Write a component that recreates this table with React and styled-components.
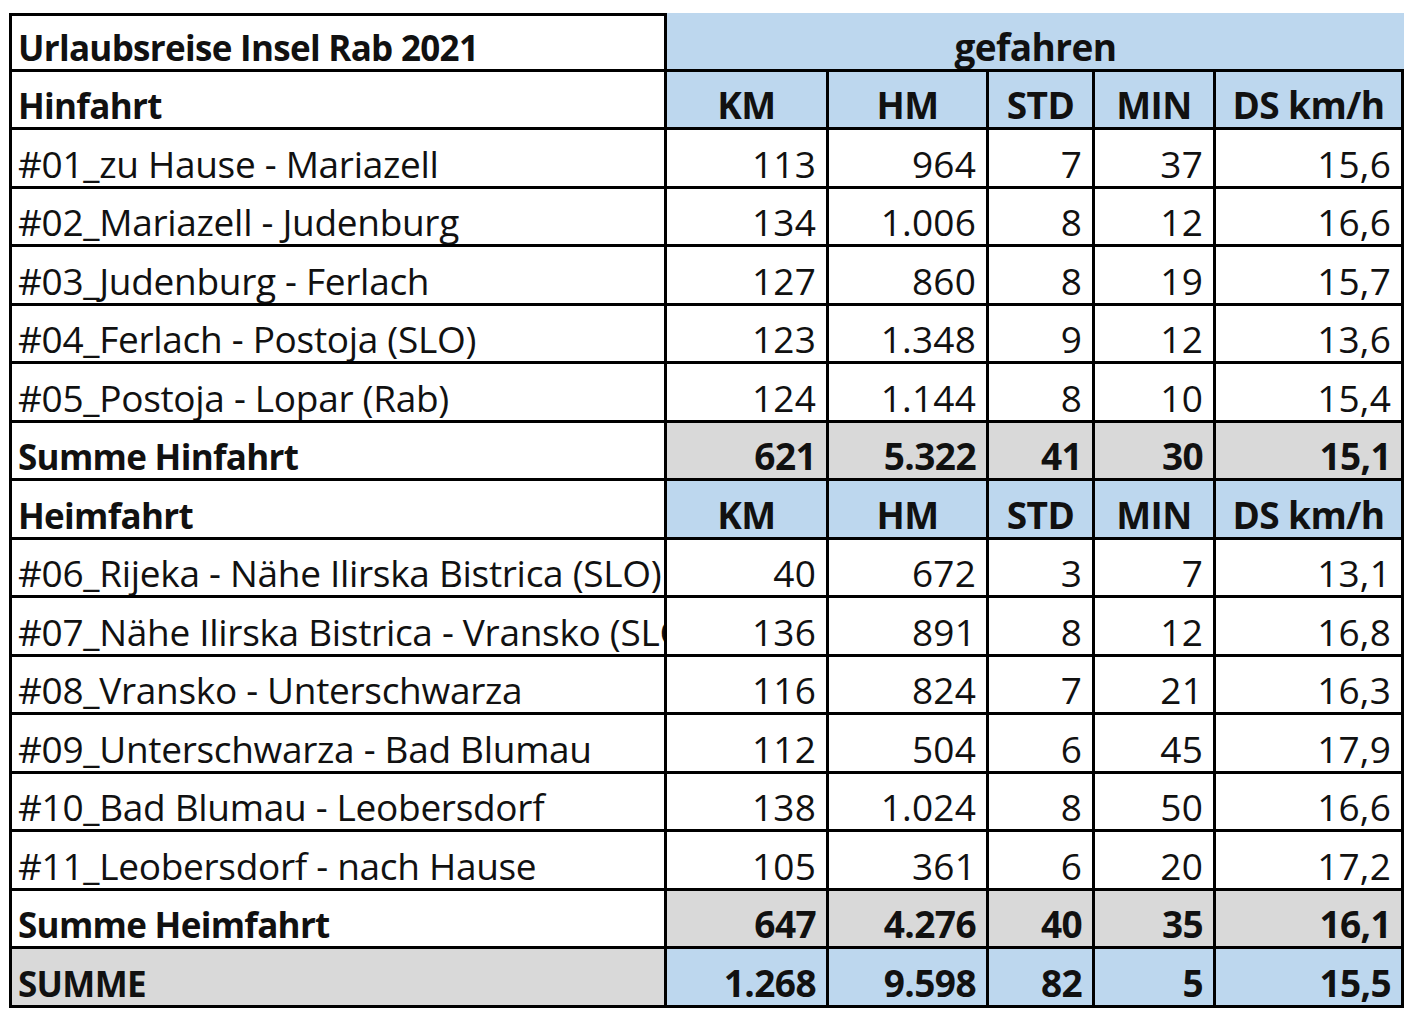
import React from "react";
import styled, { createGlobalStyle } from "styled-components";

const GlobalStyle = createGlobalStyle`
  html, body {
    margin: 0;
    padding: 0;
    background: #ffffff;
  }
  body {
    font-family: "Open Sans", "Noto Sans", sans-serif;
    color: #111111;
  }
`;

const BLUE = "#bdd7ee";
const GREY = "#d9d9d9";

const legs = {
  hin: [
    ["#01_zu Hause - Mariazell", "113", "964", "7", "37", "15,6"],
    ["#02_Mariazell - Judenburg", "134", "1.006", "8", "12", "16,6"],
    ["#03_Judenburg - Ferlach", "127", "860", "8", "19", "15,7"],
    ["#04_Ferlach - Postoja (SLO)", "123", "1.348", "9", "12", "13,6"],
    ["#05_Postoja - Lopar (Rab)", "124", "1.144", "8", "10", "15,4"],
  ],
  heim: [
    ["#06_Rijeka - Nähe Ilirska Bistrica (SLO)", "40", "672", "3", "7", "13,1"],
    ["#07_Nähe Ilirska Bistrica - Vransko (SLO)", "136", "891", "8", "12", "16,8"],
    ["#08_Vransko - Unterschwarza", "116", "824", "7", "21", "16,3"],
    ["#09_Unterschwarza - Bad Blumau", "112", "504", "6", "45", "17,9"],
    ["#10_Bad Blumau - Leobersdorf", "138", "1.024", "8", "50", "16,6"],
    ["#11_Leobersdorf - nach Hause", "105", "361", "6", "20", "17,2"],
  ],
};

const columns = ["KM", "HM", "STD", "MIN", "DS km/h"];

const Sheet = styled.div`
  display: grid;
  grid-template-columns: 658px 162px 160px 106px 121px 188px;
  grid-auto-rows: 58.5px;
  margin: 13px 0 0 9px;
  width: max-content;
`;

const Cell = styled.div`
  box-sizing: border-box;
  display: flex;
  align-items: flex-end;
  justify-content: ${(p) =>
    p.$align === "right" ? "flex-end" : p.$align === "center" ? "center" : "flex-start"};
  grid-column: ${(p) => (p.$span ? `span ${p.$span}` : "auto")};
  padding: 0 ${(p) => (p.$align === "right" ? "10px" : "8px")} 4px 8px;
  background: ${(p) => p.$bg || "#ffffff"};
  border-right: ${(p) => (p.$openRight ? "none" : "3px solid #000")};
  border-bottom: 3px solid #000;
  border-left: ${(p) => (p.$first ? "3px solid #000" : "none")};
  border-top: ${(p) => (p.$top ? "3px solid #000" : "none")};
  font-size: 37px;
  line-height: 1;
  font-weight: ${(p) => (p.$bold ? 700 : 400)};
  letter-spacing: ${(p) => (p.$bold ? "-0.6px" : "0.2px")};
  white-space: nowrap;
  overflow: hidden;
`;

const Label = styled(Cell).attrs({ $first: true })`
  padding-left: 6px;
  font-size: ${(p) => (p.$bold ? "35px" : "37px")};
  letter-spacing: ${(p) => (p.$bold ? "-0.7px" : "-0.3px")};
`;

function HeaderRow({ title }) {
  return (
    <>
      <Label $bold>{title}</Label>
      {columns.map((c) => (
        <Cell key={c} $bg={BLUE} $bold $align="center">
          {c}
        </Cell>
      ))}
    </>
  );
}

function LegRow({ row }) {
  const [name, ...values] = row;
  return (
    <>
      <Label>{name}</Label>
      {values.map((v, i) => (
        <Cell key={i} $align="right">
          {v}
        </Cell>
      ))}
    </>
  );
}

function SumRow({ title, values, labelBg, valueBg }) {
  return (
    <>
      <Label $bold $bg={labelBg}>
        {title}
      </Label>
      {values.map((v, i) => (
        <Cell key={i} $bold $align="right" $bg={valueBg}>
          {v}
        </Cell>
      ))}
    </>
  );
}

export default function App() {
  return (
    <>
      <GlobalStyle />
      <Sheet>
        <Label $bold $top>
          Urlaubsreise Insel Rab 2021
        </Label>
        <Cell $span={5} $bg={BLUE} $bold $align="center" $openRight>
          gefahren
        </Cell>

        <HeaderRow title="Hinfahrt" />
        {legs.hin.map((row) => (
          <LegRow key={row[0]} row={row} />
        ))}
        <SumRow
          title="Summe Hinfahrt"
          values={["621", "5.322", "41", "30", "15,1"]}
          valueBg={GREY}
        />

        <HeaderRow title="Heimfahrt" />
        {legs.heim.map((row) => (
          <LegRow key={row[0]} row={row} />
        ))}
        <SumRow
          title="Summe Heimfahrt"
          values={["647", "4.276", "40", "35", "16,1"]}
          valueBg={GREY}
        />
        <SumRow
          title="SUMME"
          values={["1.268", "9.598", "82", "5", "15,5"]}
          labelBg={GREY}
          valueBg={BLUE}
        />
      </Sheet>
    </>
  );
}
